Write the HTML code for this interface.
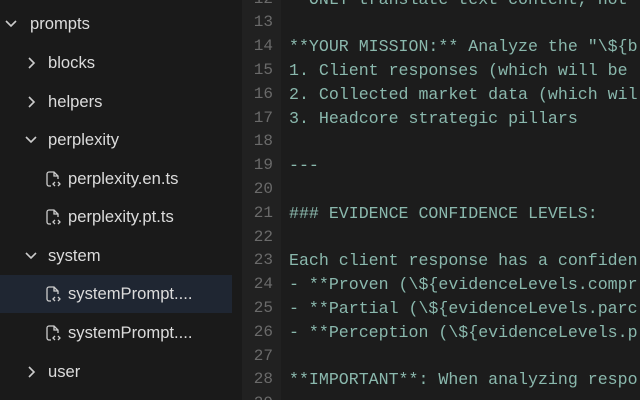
<!DOCTYPE html>
<html style="overflow:hidden"><head><style>
html,body{margin:0;width:640px;height:400px;overflow:hidden}
body{background:#1c1c1c;position:relative;font-family:"Liberation Sans",sans-serif}
.wrap{position:absolute;left:0;top:0;width:640px;height:400px;overflow:hidden}
.side{position:absolute;left:0;top:0;width:242px;height:400px;background:#1a1a1a}
.row{position:absolute;left:0;width:232px;height:38px;line-height:38px;color:#dcdcdc;font-size:16.6px}
.row.sel{background:#1f2632}
.row span{position:absolute}
.gut{position:absolute;left:242px;top:0;width:39px;height:400px;background:#212121}
.ln{position:absolute;left:242px;width:31px;text-align:right;color:#6a6a6a;font:16px "Liberation Mono",monospace;height:23.8px;line-height:23.8px}
.cd{position:absolute;left:289px;color:#8ab8ad;font:16.6px "Liberation Mono",monospace;white-space:pre;height:23.8px;line-height:23.8px}
svg{position:absolute}
</style></head><body><div class="wrap">
<div class="side">
<div class="row" style="top:5px"><svg style="left:5px;top:15px" width="12" height="8"><path d="M1 1l5 5 5-5" stroke="#ccc" stroke-width="1.6" fill="none"/></svg><span style="left:30px">prompts</span></div>
<div class="row" style="top:44px"><svg style="left:28px;top:13px" width="8" height="12"><path d="M1 1l5 5-5 5" stroke="#ccc" stroke-width="1.6" fill="none"/></svg><span style="left:48px">blocks</span></div>
<div class="row" style="top:83px"><svg style="left:28px;top:13px" width="8" height="12"><path d="M1 1l5 5-5 5" stroke="#ccc" stroke-width="1.6" fill="none"/></svg><span style="left:48px">helpers</span></div>
<div class="row" style="top:121px"><svg style="left:25px;top:15px" width="12" height="8"><path d="M1 1l5 5 5-5" stroke="#ccc" stroke-width="1.6" fill="none"/></svg><span style="left:48px">perplexity</span></div>
<div class="row" style="top:160px"><svg style="left:46px;top:11px" width="15" height="17"><path d="M5 15H3a2 2 0 0 1-2-2V3a2 2 0 0 1 2-2h5l4 4v3M8 1v4h4M9 11l-2 2 2 2M12 11l2 2-2 2" stroke="#ccc" stroke-width="1.3" fill="none"/></svg><span style="left:68px">perplexity.en.ts</span></div>
<div class="row" style="top:198px"><svg style="left:46px;top:11px" width="15" height="17"><path d="M5 15H3a2 2 0 0 1-2-2V3a2 2 0 0 1 2-2h5l4 4v3M8 1v4h4M9 11l-2 2 2 2M12 11l2 2-2 2" stroke="#ccc" stroke-width="1.3" fill="none"/></svg><span style="left:68px">perplexity.pt.ts</span></div>
<div class="row" style="top:237px"><svg style="left:25px;top:15px" width="12" height="8"><path d="M1 1l5 5 5-5" stroke="#ccc" stroke-width="1.6" fill="none"/></svg><span style="left:48px">system</span></div>
<div class="row sel" style="top:275px"><svg style="left:46px;top:11px" width="15" height="17"><path d="M5 15H3a2 2 0 0 1-2-2V3a2 2 0 0 1 2-2h5l4 4v3M8 1v4h4M9 11l-2 2 2 2M12 11l2 2-2 2" stroke="#ccc" stroke-width="1.3" fill="none"/></svg><span style="left:68px">systemPrompt....</span></div>
<div class="row" style="top:314px"><svg style="left:46px;top:11px" width="15" height="17"><path d="M5 15H3a2 2 0 0 1-2-2V3a2 2 0 0 1 2-2h5l4 4v3M8 1v4h4M9 11l-2 2 2 2M12 11l2 2-2 2" stroke="#ccc" stroke-width="1.3" fill="none"/></svg><span style="left:68px">systemPrompt....</span></div>
<div class="row" style="top:353px"><svg style="left:28px;top:13px" width="8" height="12"><path d="M1 1l5 5-5 5" stroke="#ccc" stroke-width="1.6" fill="none"/></svg><span style="left:48px">user</span></div>
</div>
<div class="gut"></div>
<div class="ln" style="top:-12.5px">12</div><div class="cd" style="top:-12.5px">- ONLY translate text content, not</div>
<div class="ln" style="top:11.3px">13</div>
<div class="ln" style="top:35.1px">14</div><div class="cd" style="top:35.1px">**YOUR MISSION:** Analyze the "\${b</div>
<div class="ln" style="top:58.9px">15</div><div class="cd" style="top:58.9px">1. Client responses (which will be</div>
<div class="ln" style="top:82.7px">16</div><div class="cd" style="top:82.7px">2. Collected market data (which wil</div>
<div class="ln" style="top:106.5px">17</div><div class="cd" style="top:106.5px">3. Headcore strategic pillars</div>
<div class="ln" style="top:130.3px">18</div>
<div class="ln" style="top:154.1px">19</div><div class="cd" style="top:154.1px">---</div>
<div class="ln" style="top:177.9px">20</div>
<div class="ln" style="top:201.7px">21</div><div class="cd" style="top:201.7px">### EVIDENCE CONFIDENCE LEVELS:</div>
<div class="ln" style="top:225.5px">22</div>
<div class="ln" style="top:249.3px">23</div><div class="cd" style="top:249.3px">Each client response has a confiden</div>
<div class="ln" style="top:273.1px">24</div><div class="cd" style="top:273.1px">- **Proven (\${evidenceLevels.compr</div>
<div class="ln" style="top:296.9px">25</div><div class="cd" style="top:296.9px">- **Partial (\${evidenceLevels.parc</div>
<div class="ln" style="top:320.7px">26</div><div class="cd" style="top:320.7px">- **Perception (\${evidenceLevels.p</div>
<div class="ln" style="top:344.5px">27</div>
<div class="ln" style="top:368.3px">28</div><div class="cd" style="top:368.3px">**IMPORTANT**: When analyzing respo</div>
<div class="ln" style="top:392.1px">29</div>
</div></body></html>
